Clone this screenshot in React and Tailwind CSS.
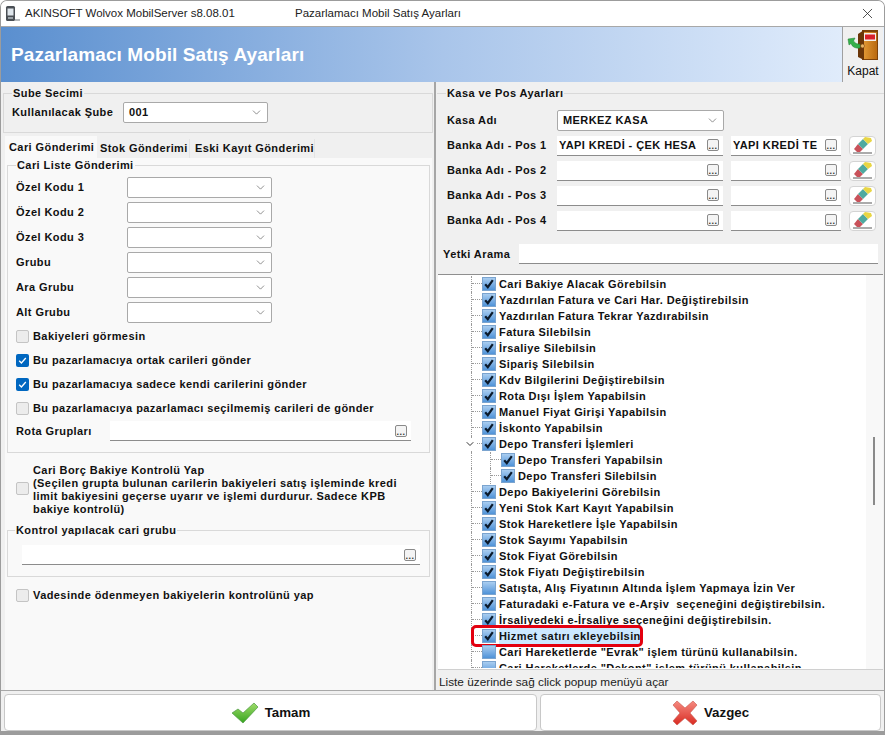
import { ChevronDown, X } from 'lucide-react'

const treeRows = [
  { text: 'Cari Bakiye Alacak Görebilsin', on: true },
  { text: 'Yazdırılan Fatura ve Cari Har. Değiştirebilsin', on: true },
  { text: 'Yazdırılan Fatura Tekrar Yazdırabilsin', on: true },
  { text: 'Fatura Silebilsin', on: true },
  { text: 'İrsaliye Silebilsin', on: true },
  { text: 'Sipariş Silebilsin', on: true },
  { text: 'Kdv Bilgilerini Değiştirebilsin', on: true },
  { text: 'Rota Dışı İşlem Yapabilsin', on: true },
  { text: 'Manuel Fiyat Girişi Yapabilsin', on: true },
  { text: 'İskonto Yapabilsin', on: true },
  { text: 'Depo Transferi İşlemleri', on: true, open: true },
  { text: 'Depo Transferi Yapabilsin', on: true, child: true },
  { text: 'Depo Transferi Silebilsin', on: true, child: true },
  { text: 'Depo Bakiyelerini Görebilsin', on: true },
  { text: 'Yeni Stok Kart Kayıt Yapabilsin', on: true },
  { text: 'Stok Hareketlere İşle Yapabilsin', on: true },
  { text: 'Stok Sayımı Yapabilsin', on: true },
  { text: 'Stok Fiyat Görebilsin', on: true },
  { text: 'Stok Fiyatı Değiştirebilsin', on: true },
  { text: 'Satışta, Alış Fiyatının Altında İşlem Yapmaya İzin Ver', on: false },
  { text: 'Faturadaki e-Fatura ve e-Arşiv  seçeneğini değiştirebilsin.', on: true },
  { text: 'İrsaliyedeki e-İrsaliye seçeneğini değiştirebilsin.', on: true },
  { text: 'Hizmet satırı ekleyebilsin', on: true, marked: true },
  { text: 'Cari Hareketlerde "Evrak" işlem türünü kullanabilsin.', on: false },
]

function Combo({ value, className }) {
  return (
    <div className={`flex items-center justify-between h-[21px] bg-white border border-[#a9a9a9] rounded-[2px] pl-[5px] pr-[4px] ${className}`}>
      <span>{value}</span>
      <ChevronDown size={13} strokeWidth={1.2} className="text-[#555]" />
    </div>
  )
}

function Dots() {
  return (
    <span className="flex items-end justify-center shrink-0 w-[12px] h-[12px] bg-[#f4f4f4] border border-[#8a8a8a] rounded-[2px] text-[9px] leading-[8px] text-[#333]">...</span>
  )
}

function LookupInput({ value, className }) {
  return (
    <div className={`flex items-center justify-between h-[20px] bg-white border-b border-[#8c8c8c] pl-[2px] pr-[4px] overflow-hidden ${className}`}>
      <span className="whitespace-nowrap overflow-hidden">{value}</span>
      <Dots />
    </div>
  )
}

function WinCheck({ on, className = '' }) {
  if (on) {
    return (
      <span className={`flex items-center justify-center shrink-0 w-[13px] h-[13px] rounded-[2px] bg-[#0067c0] ${className}`}>
        <svg width="9" height="9" viewBox="0 0 9 9"><path d="M1.2 4.8 3.4 7 7.8 2" fill="none" stroke="#fff" strokeWidth="1.3" /></svg>
      </span>
    )
  }
  return <span className={`shrink-0 w-[13px] h-[13px] rounded-[2px] bg-[#ececec] border border-[#c4c4c4] ${className}`} />
}

function CheckRow({ on, children, className = '' }) {
  return (
    <div className={`flex items-center gap-[4px] h-[24px] ${className}`}>
      <WinCheck on={on} />
      <span>{children}</span>
    </div>
  )
}

function TreeCheck({ on }) {
  return (
    <span className="relative shrink-0 w-[14px] h-[14px] border border-[#7ba4cf] bg-gradient-to-b from-[#a9cdf0] to-[#4f93d8]">
      {on && (
        <svg width="12" height="12" viewBox="0 0 12 12" className="absolute left-0 top-0">
          <path d="M2.2 6.2 4.8 9.2 9.8 2.2" fill="none" stroke="#0b1a2b" strokeWidth="2.2" />
        </svg>
      )}
    </span>
  )
}

function Connector({ className = 'w-[10px]' }) {
  return (
    <div className={`h-4 border-l border-dotted border-[#9a9a9a] shrink-0 ${className}`}>
      <div className="h-2 border-b border-dotted border-[#9a9a9a]" />
    </div>
  )
}

function TreeRow({ row }) {
  return (
    <div className="relative flex items-center h-4 pl-[31px] whitespace-pre">
      {row.child ? (
        <>
          <div className="h-4 w-[19px] shrink-0 border-l border-dotted border-[#9a9a9a]" />
          <Connector className="w-[11px]" />
        </>
      ) : (
        <Connector className="w-[11px]" />
      )}
      {row.open && (
        <ChevronDown size={12} strokeWidth={2} className="absolute left-[24px] top-[2px] bg-white text-[#333]" />
      )}
      <TreeCheck on={row.on} />
      <span className={`ml-[3px] ${row.marked ? 'bg-[#cce8ff] pr-[1px]' : ''}`}>{row.text}</span>
      {row.marked && (
        <span className="absolute left-[31px] top-[-3px] w-[172px] h-[22px] border-[3px] border-[#e3000f] rounded-[5px]" />
      )}
    </div>
  )
}

function AppIcon() {
  return (
    <svg width="16" height="18" viewBox="0 0 16 18" className="shrink-0">
      <rect x="1" y="1" width="9" height="15" rx="1.5" fill="#4a4f55" />
      <rect x="2.5" y="3.5" width="6" height="7" fill="#dfe6ec" />
      <rect x="3" y="12" width="5" height="2" fill="#9aa2a8" />
      <rect x="10" y="14" width="5" height="2" fill="#b5b9bc" />
    </svg>
  )
}

function ExitDoor() {
  return (
    <svg width="32" height="32" viewBox="0 0 32 32">
      <defs>
        <linearGradient id="door" x1="0" y1="0" x2="1" y2="0">
          <stop offset="0" stopColor="#e39a35" />
          <stop offset="1" stopColor="#b9690f" />
        </linearGradient>
      </defs>
      <rect x="15" y="1" width="16" height="30" fill="#7d4209" />
      <rect x="16" y="3" width="14" height="27" fill="url(#door)" />
      <path d="M11 5 17 1 17 31 11 28Z" fill="#6b3608" />
      <rect x="17" y="4" width="12" height="8" fill="#f4efe8" />
      <rect x="18" y="5.5" width="10" height="5" fill="#d8202a" />
      <circle cx="15.5" cy="17" r="2" fill="#e9b66a" stroke="#7a3f0c" strokeWidth=".6" />
      <path d="M1 10 8 9 6.5 12Q9 16 13 15L13 19Q6 20 4 14.5L2 16Z" fill="#35b04a" stroke="#1f7d31" strokeWidth=".5" />
    </svg>
  )
}

function Eraser() {
  return (
    <svg width="22" height="18" viewBox="0 0 22 18">
      <path d="M1 16 20 16" stroke="#8f8f8f" strokeWidth="1.4" />
      <path d="M5 15 2 12 6 7 11 12 8 15Z" fill="#c9525a" />
      <path d="M6 7 11 2 16 7 11 12Z" fill="#4fa9a0" />
      <path d="M11 2 13 0 19 1 20 4 16 7Z" fill="#e8d544" />
    </svg>
  )
}

function OkCheck() {
  return (
    <svg width="28" height="22" viewBox="0 0 28 22">
      <defs>
        <linearGradient id="ok" x1="0" y1="0" x2="0" y2="1">
          <stop offset="0" stopColor="#9fdc6a" />
          <stop offset="1" stopColor="#37a51f" />
        </linearGradient>
      </defs>
      <path d="M1 11 7 7 12 11 23 1 27 5 12 21Z" fill="url(#ok)" stroke="#4f9a45" strokeWidth=".7" />
    </svg>
  )
}

function CancelX() {
  return (
    <svg width="26" height="26" viewBox="0 0 26 26">
      <defs>
        <linearGradient id="no" x1="0" y1="0" x2="0" y2="1">
          <stop offset="0" stopColor="#f58a80" />
          <stop offset="1" stopColor="#d92b22" />
        </linearGradient>
      </defs>
      <path d="M1 5 5 1 13 8 21 1 25 5 18 13 25 21 21 25 13 18 5 25 1 21 8 13Z" fill="url(#no)" stroke="#c7574e" strokeWidth=".6" />
    </svg>
  )
}

export default function App() {
  return (
    <div className="w-[885px] h-[735px] flex flex-col overflow-hidden bg-[#f0f0f0] border-t border-x border-b-4 border-[#9c9c9c] rounded-t-[7px] font-['Liberation_Sans',sans-serif] text-[11px] font-bold tracking-[0.42px] text-[#111]">
      <div className="flex items-center h-[26px] bg-white border-b border-[#a8a8a8] pl-[4px] pr-[5px] font-normal text-[11.5px] tracking-normal text-[#222] shrink-0">
        <AppIcon />
        <span className="ml-[4px] w-[270px]">AKINSOFT Wolvox MobilServer s8.08.01</span>
        <span>Pazarlamacı Mobil Satış Ayarları</span>
        <X size={17} strokeWidth={1.1} className="ml-auto mr-[3px] text-[#222]" />
      </div>

      <div className="flex items-stretch h-[55px] shrink-0 bg-gradient-to-r from-[#5a8fcf] via-[#a9c5ea] to-[#e6f0fd]">
        <h1 className="flex-1 pl-[10px] pt-[16px] text-white text-[19px] leading-[24px] font-bold tracking-[0.1px]">Pazarlamacı Mobil Satış Ayarları</h1>
        <div className="flex flex-col items-center w-[41px] mr-[1px] pt-[2px] bg-[#f0f0f0] border-l border-[#a0a0a0] font-normal text-[12px] tracking-normal leading-[14px]">
          <ExitDoor />
          <span className="mt-[3px]">Kapat</span>
        </div>
      </div>

      <div className="flex flex-1 min-h-0 border-b border-[#a8a8a8]">
        <div className="w-[435px] shrink-0 border-r-2 border-[#a6a6a6] flex flex-col pt-[4px] pl-[2px] pr-[1px]">
          <fieldset className="h-[47px] border border-[#d9d9d9] pl-[8px]">
            <legend className="px-[1px] leading-[14px]">Sube Secimi</legend>
            <div className="flex items-center gap-[8px] mt-[2px]">
              <span className="w-[103px] whitespace-nowrap">Kullanılacak Şube</span>
              <Combo value="001" className="w-[145px]" />
            </div>
          </fieldset>

          <div className="flex h-[22px] items-end mt-[3px] pl-[2px] whitespace-nowrap">
            <div className="flex items-center h-[22px] w-[92px] pl-[4px] bg-[#f9f9f9]">Cari Gönderimi</div>
            <div className="flex items-center h-[19px] w-[93px] pl-[3px] border-r border-[#e4e4e4]">Stok Gönderimi</div>
            <div className="flex items-center h-[19px] w-[125px] pl-[5px] border-r border-[#e4e4e4]">Eski Kayıt Gönderimi</div>
          </div>

          <div className="flex-1 ml-[2px] mr-[1px] bg-[#f9f9f9] px-[2px] min-h-0">
            <fieldset className="h-[295px] border border-[#d9d9d9] pl-[8px]">
              <legend className="px-[1px] leading-[14px]">Cari Liste Gönderimi</legend>
              <div className="h-[3px]" />
              {['Özel Kodu 1', 'Özel Kodu 2', 'Özel Kodu 3', 'Grubu', 'Ara Grubu', 'Alt Grubu'].map(label => (
                <div key={label} className="flex items-center h-[25px]">
                  <span className="w-[111px]">{label}</span>
                  <Combo value="" className="w-[145px]" />
                </div>
              ))}
              <CheckRow on={false} className="mt-[-1px]">Bakiyeleri görmesin</CheckRow>
              <CheckRow on>Bu pazarlamacıya ortak carileri gönder</CheckRow>
              <CheckRow on>Bu pazarlamacıya sadece kendi carilerini gönder</CheckRow>
              <CheckRow on={false}>Bu pazarlamacıya pazarlamacı seçilmemiş carileri de gönder</CheckRow>
              <div className="flex items-center h-[22px]">
                <span className="w-[94px]">Rota Grupları</span>
                <LookupInput value="" className="w-[301px]" />
              </div>
            </fieldset>

            <div className="flex items-center gap-[4px] pl-[9px] mt-[11px] h-[52px]">
              <WinCheck on={false} className="mb-[4px]" />
              <p className="w-[370px] leading-[13px]">
                Cari Borç Bakiye Kontrolü Yap<br />
                (Seçilen grupta bulunan carilerin bakiyeleri satış işleminde kredi limit bakiyesini geçerse uyarır ve işlemi durdurur. Sadece KPB bakiye kontrolü)
              </p>
            </div>

            <fieldset className="h-[54px] mt-[7px] border border-[#d9d9d9] pl-[14px] pr-[9px]">
              <legend className="ml-[-7px] px-[1px] leading-[14px]">Kontrol yapılacak cari grubu</legend>
              <LookupInput value="" className="w-full mt-[8px]" />
            </fieldset>

            <CheckRow on={false} className="ml-[9px] mt-[6px]">Vadesinde ödenmeyen bakiyelerin kontrolünü yap</CheckRow>
          </div>
        </div>

        <div className="flex-1 flex flex-col min-w-0 pt-[4px] pl-[1px]">
          <fieldset className="h-[188px] border-t border-[#d9d9d9] pl-[10px] pr-[5px]">
            <legend className="ml-[-1px] px-[1px] leading-[14px]">Kasa ve Pos Ayarları</legend>
            <div className="flex items-center h-[21px] mt-[10px] mb-[2px]">
              <span className="w-[110px]">Kasa Adı</span>
              <Combo value="MERKEZ KASA" className="w-[167px]" />
            </div>
            {[1, 2, 3, 4].map(n => (
              <div key={n} className="flex items-center h-[25px]">
                <span className="w-[110px]">Banka Adı - Pos {n}</span>
                <LookupInput value={n === 1 ? 'YAPI KREDİ - ÇEK HESA' : ''} className="w-[166px]" />
                <LookupInput value={n === 1 ? 'YAPI KREDİ TE' : ''} className="w-[110px] ml-[8px]" />
                <span className="flex items-center justify-center w-[27px] h-[20px] ml-[8px] bg-white border border-[#d4d4d4] rounded-[4px]">
                  <Eraser />
                </span>
              </div>
            ))}
            <div className="flex items-center h-[20px] mt-[11px] ml-[-4px]">
              <span className="w-[76px]">Yetki Arama</span>
              <div className="w-[359px] h-[20px] bg-white border-b border-[#8c8c8c]" />
            </div>
          </fieldset>

          <div className="flex-1 min-h-0 ml-[1px] mr-[1px] flex flex-col border-t border-[#8f8f8f]">
            <div className="relative flex-1 min-h-0 bg-white overflow-hidden pt-[1px] pl-[2px]">
              {treeRows.map(row => <TreeRow key={row.text} row={row} />)}
              <div className="relative h-[8px] overflow-hidden">
                <TreeRow row={{ text: 'Cari Hareketlerde "Dekont" işlem türünü kullanabilsin.', on: false }} />
              </div>
              <div className="absolute right-0 top-0 bottom-0 w-[17px] bg-[#f8f8f8]">
                <div className="absolute left-[7px] top-[162px] w-[2px] h-[68px] bg-[#8a8a8a]" />
              </div>
            </div>
            <div className="flex items-center h-[21px] shrink-0 bg-[#f0f0f0] border-t border-[#d0d0d0] pl-[1px] pt-[6px] font-normal text-[11.8px] tracking-normal text-[#222]">
              Liste üzerinde sağ click popup menüyü açar
            </div>
          </div>
        </div>
      </div>

      <div className="flex h-[40px] shrink-0 gap-[3px] px-[3px] pt-[3px] bg-[#f0f0f0] text-[13.3px] tracking-normal">
        <button className="w-[533px] flex items-center justify-center gap-[6px] bg-white border border-[#c8c8c8] rounded-[4px] font-bold">
          <OkCheck />
          Tamam
        </button>
        <button className="flex-1 flex items-center justify-center gap-[6px] bg-white border border-[#c8c8c8] rounded-[4px] font-bold">
          <CancelX />
          Vazgec
        </button>
      </div>
    </div>
  )
}
